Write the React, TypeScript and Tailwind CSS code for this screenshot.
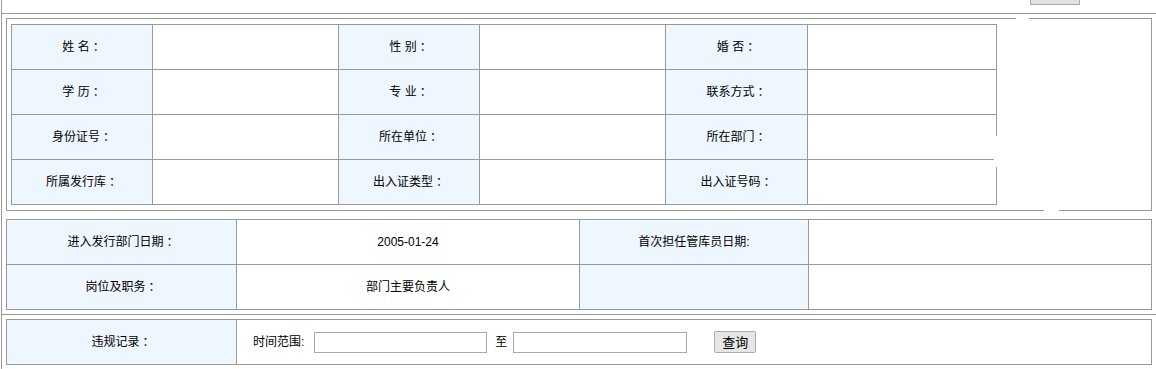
const rows = [
  ["姓 名：", "", "性 别：", "", "婚 否：", ""],
  ["学 历：", "", "专 业：", "", "联系方式：", ""],
  ["身份证号：", "", "所在单位：", "", "所在部门：", ""],
  ["所属发行库：", "", "出入证类型：", "", "出入证号码：", ""],
];

const widths = ["w-[141px]", "w-[186px]", "w-[141px]", "w-[186px]", "w-[142px]", "w-[189px]"];

const label = "flex items-center justify-center bg-[#eef6ff] border-r border-b border-[#999]";
const value = "flex items-center justify-center bg-white border-r border-b border-[#999]";

// full-width colon sits in the middle of its em box, as in the original page
const Text = ({ text }: { text: string }) => {
  if (!text.endsWith("：")) return <>{text}</>;
  return (
    <>
      {text.slice(0, -1)}
      <span style={{ fontFamily: '"Noto Sans CJK TC", sans-serif' }}>：</span>
    </>
  );
};

const App = () => {
  return (
    <div
      className="ml-px w-[1155px] border-l border-[#999] bg-white text-[12px] text-black"
      style={{ fontFamily: '"Liberation Sans", "Noto Sans CJK SC", sans-serif' }}
    >
      {/* top strip with the cut-off button */}
      <div className="flex h-[14px] justify-end border-b border-[#999] pr-[76px]">
        <div className="h-[5px] w-[50px] border-x border-b border-[#adadad] bg-[#e1e1e1]" />
      </div>

      <div className="px-1 pt-1 pb-1">
        {/* basic info */}
        <div className="relative flex border border-[#999] px-1 py-[5px]">
          <div className="border-l border-t border-[#999]">
            {rows.map((row, i) => (
              <div key={i} className="flex h-[45px]">
                {row.map((cell, j) => (
                  <div key={j} className={`${j % 2 === 0 ? label : value} ${widths[j]}`}>
                    <Text text={cell} />
                  </div>
                ))}
              </div>
            ))}
          </div>
          <div className="flex-1" />
          <span className="absolute top-[-1px] left-[1009px] h-px w-[13px] bg-white" />
          <span className="absolute bottom-[-1px] left-[1037px] h-px w-[15px] bg-white" />
          <span className="absolute top-[117px] left-[987px] h-[31px] w-[3px] bg-white" />
        </div>

        {/* department info */}
        <div className="mt-[8px] border-l border-t border-[#999]">
          <div className="flex h-[45px]">
            <div className={`${label} w-[230px]`}>
              <Text text="进入发行部门日期：" />
            </div>
            <div className={`${value} w-[343px]`}>2005-01-24</div>
            <div className={`${label} w-[229px]`}>首次担任管库员日期:</div>
            <div className={`${value} flex-1`} />
          </div>
          <div className="flex h-[45px]">
            <div className={`${label} w-[230px]`}>
              <Text text="岗位及职务：" />
            </div>
            <div className={`${value} w-[343px]`}>部门主要负责人</div>
            <div className={`${label} w-[229px]`} />
            <div className={`${value} flex-1`} />
          </div>
        </div>
      </div>

      <div className="border-t border-[#999] px-1 pt-1 pb-1">
        <div className="flex h-[46px] border-l border-t border-[#999]">
          <div className={`${label} w-[230px]`}>
            <Text text="违规记录：" />
          </div>
          <div className="flex flex-1 items-center border-r border-b border-[#999] pl-[16px]">
            <span>时间范围:</span>
            <input className="ml-[10px] h-[21px] w-[173px] border border-[#a9a9a9] bg-white outline-none" />
            <span className="ml-[8px]">至</span>
            <input className="ml-[6px] h-[21px] w-[174px] border border-[#a9a9a9] bg-white outline-none" />
            <button className="ml-[27px] h-[22px] w-[42px] rounded-[2px] border border-[#adadad] bg-[#e6e6e6] text-[13px] leading-none">
              查询
            </button>
          </div>
        </div>
      </div>
    </div>
  );
};

export default App;
